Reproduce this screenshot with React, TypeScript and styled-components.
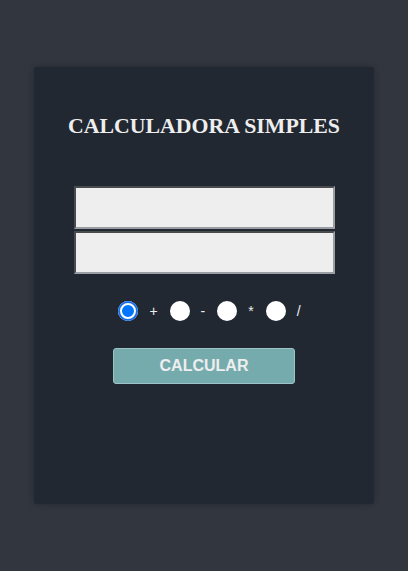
import React, { useState } from "react";
import styled, { createGlobalStyle } from "styled-components";

const Global = createGlobalStyle`
  html, body { margin: 0; padding: 0; background: #31363f; }
  body { height: 571px; font-family: "Liberation Sans", Arial, sans-serif; }
`;

const Page = styled.div`
  padding-top: 67px;
  display: flex;
  justify-content: center;
`;

const Card = styled.div`
  width: 340px;
  height: 437px;
  box-sizing: border-box;
  background: #222831;
  border-radius: 3px;
  box-shadow: 0 0 6px rgba(0, 0, 0, 0.25);
  display: flex;
  flex-direction: column;
  align-items: center;
  padding-top: 46px;
`;

const Title = styled.h1`
  margin: 0;
  font-family: "Liberation Serif", "Times New Roman", serif;
  font-weight: bold;
  font-size: 21.8px;
  line-height: 26px;
  color: #eeeeee;
`;

const Inputs = styled.div`
  margin-top: 47px;
  display: flex;
  flex-direction: column;
  gap: 2px;
`;

const Field = styled.input`
  width: 261px;
  height: 43px;
  box-sizing: border-box;
  background: #eeeeee;
  border: 2px inset #9a9da2;
  outline: none;
  font-size: 16px;
`;

const Ops = styled.div`
  margin-top: 27px;
  padding-left: 11px;
  display: flex;
  align-items: center;
`;

const Radio = styled.input`
  appearance: none;
  -webkit-appearance: none;
  width: 20px;
  height: 20px;
  margin: 0 11px 0 0;
  border-radius: 50%;
  background: #ffffff;
  &:checked {
    background: #0075ff;
    box-shadow: inset 0 0 0 2px #1a6fe0, inset 0 0 0 4px #ffffff;
  }
`;

const OpLabel = styled.label`
  display: flex;
  align-items: center;
  color: #eeeeee;
  font-size: 14px;
  margin-right: 12px;
  &:last-child { margin-right: 0; }
`;

const Button = styled.button`
  margin-top: 27px;
  width: 182px;
  height: 36px;
  background: #76abae;
  border: 1px solid #9cc3c5;
  border-radius: 3px;
  color: #eeeeee;
  font-family: "Liberation Sans", Arial, sans-serif;
  font-weight: bold;
  font-size: 16px;
  padding: 0;
  cursor: pointer;
`;

const ops = ["+", "-", "*", "/"];

export default function App() {
  const [op, setOp] = useState("+");
  return (
    <>
      <Global />
      <Page>
        <Card>
          <Title>CALCULADORA SIMPLES</Title>
          <Inputs>
            <Field type="number" />
            <Field type="number" />
          </Inputs>
          <Ops>
            {ops.map((o) => (
              <OpLabel key={o}>
                <Radio
                  type="radio"
                  name="op"
                  checked={op === o}
                  onChange={() => setOp(o)}
                />
                <span>{o}</span>
              </OpLabel>
            ))}
          </Ops>
          <Button>CALCULAR</Button>
        </Card>
      </Page>
    </>
  );
}
